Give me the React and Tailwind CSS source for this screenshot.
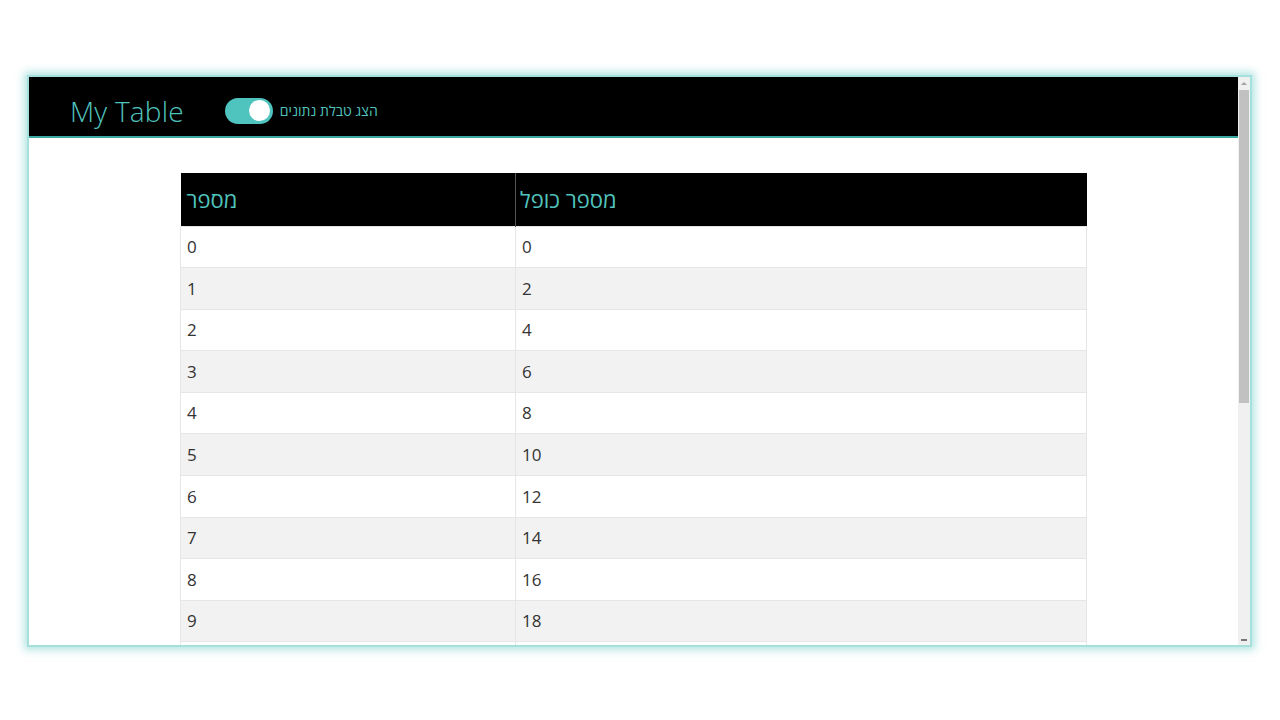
import React from "react";

const rows = Array.from({ length: 10 }, (_, i) => i);

export default function App() {
  return (
    <div className="w-[1280px] h-[720px] bg-white overflow-hidden pt-[75px] pl-[27px]" style={{ fontFamily: '"Open Sans", "Noto Sans", sans-serif' }}>
      {/* browser frame */}
      <div className="w-[1225px] h-[572px] border-2 border-[#a6e0dc] shadow-[0_0_8px_3px_rgba(130,212,206,0.6)] flex bg-white overflow-hidden">
        <div className="flex-1 flex flex-col overflow-hidden">
          {/* Header */}
          <div className="h-[61px] shrink-0 bg-black flex items-center pt-[8px] pl-[41px] border-b-2 border-[#3aa7a1]">
            <h1 className="text-[28px] font-light text-[#4fc3bd] leading-none tracking-[0.2px]">My Table</h1>
            <div className="ml-[41px] w-[48px] h-[26px] rounded-full bg-[#4fc3bd] flex items-center justify-end pr-[3px]">
              <div className="w-[21px] h-[21px] rounded-full bg-white" />
            </div>
            <span dir="rtl" className="ml-[7px] text-[14px] text-[#4fc3bd]">הצג טבלת נתונים</span>
          </div>

          {/* Table */}
          <div className="pt-[35px] pl-[151px]">
            <table className="w-[907px] border-collapse text-left">
              <thead>
                <tr className="h-[53px] bg-black text-[#4fc3bd] text-[22px]">
                  <th className="w-[335px] px-[6px] font-normal border-r border-[#555]">
                    <span dir="rtl">מספר</span>
                  </th>
                  <th className="px-[4px] font-normal">
                    <span dir="rtl">מספר כופל</span>
                  </th>
                </tr>
              </thead>
              <tbody className="text-[17px] text-[#333]">
                {rows.map((n) => (
                  <tr key={n} className={`h-[41.6px] ${n % 2 ? "bg-[#f2f2f2]" : "bg-white"}`}>
                    <td className="px-[6px] border border-[#e6e6e6]">{n}</td>
                    <td className="px-[6px] border border-[#e6e6e6]">{n * 2}</td>
                  </tr>
                ))}
                <tr className="h-[41.6px] bg-white">
                  <td className="border border-[#e6e6e6]" />
                  <td className="border border-[#e6e6e6]" />
                </tr>
              </tbody>
            </table>
          </div>
        </div>

        {/* Scrollbar */}
        <div className="w-[12px] shrink-0 bg-[#f0f0f0] flex flex-col items-center">
          <div className="h-[13px] w-full flex items-center justify-center">
            <div className="w-0 h-0 border-l-[3px] border-r-[3px] border-b-[3px] border-l-transparent border-r-transparent border-b-[#a3a3a3]" />
          </div>
          <div className="w-[10px] h-[313px] bg-[#c1c1c1]" />
          <div className="flex-1" />
          <div className="h-[6px] w-full flex items-start justify-center">
            <div className="w-[6px] h-[2px] bg-[#777]" />
          </div>
        </div>
      </div>
    </div>
  );
}
